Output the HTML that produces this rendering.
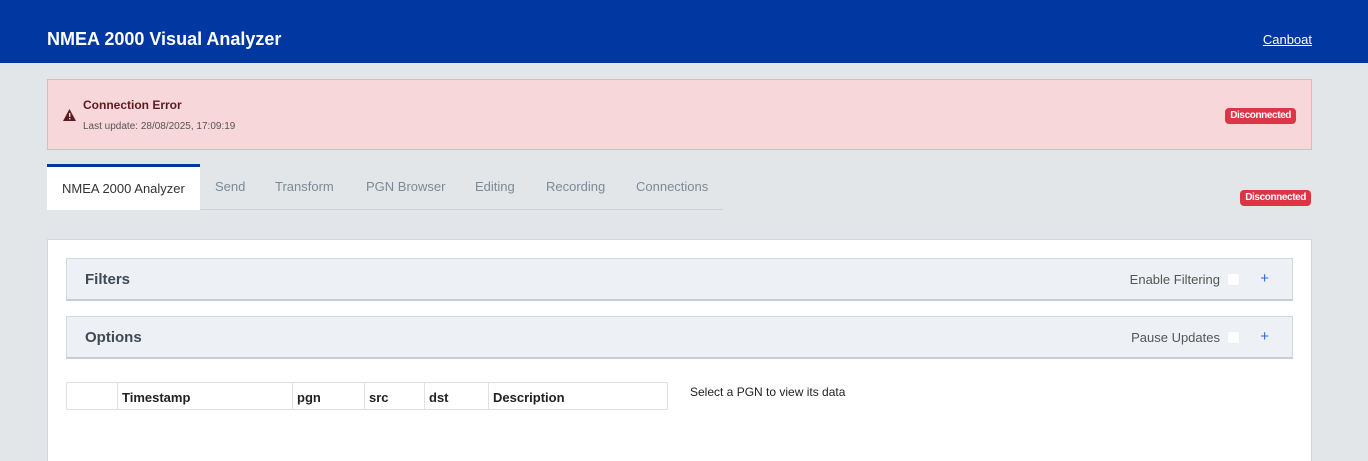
<!DOCTYPE html><html><head><style>
*{box-sizing:border-box;margin:0;padding:0}
html,body{width:1368px;height:461px;overflow:hidden}
body{background:#e3e6e8;font-family:"Liberation Sans","DejaVu Sans",sans-serif;position:relative}
.hdr{position:absolute;left:0;top:0;width:1368px;height:63px;background:#0037a0}
.hdr h1{position:absolute;left:47px;top:29px;color:#fff;font-size:18px;font-weight:bold}
.hdr a{position:absolute;right:56px;top:32px;color:#fff;font-size:13px;text-decoration:underline}
.alert{position:absolute;left:47px;top:79px;width:1265px;height:71px;background:#f8d7da;border:1px solid #f1b0b7}
.badge{position:absolute;background:#dc3545;color:#fff;font-size:10px;font-weight:bold;padding:2px 5px;border-radius:4px;line-height:12px;letter-spacing:-0.4px}
.tabs{position:absolute;left:47px;top:164px;width:676px;height:46px;border-bottom:1px solid #ccd2d8}
.tab{position:absolute;top:15px;font-size:13px;color:#7a8a99}
.active{position:absolute;left:0;top:0;width:153px;height:46px;background:#fff;border-top:3px solid #0037a0;font-size:13px;color:#333;padding:14px 0 0 15px}
.card{position:absolute;left:47px;top:239px;width:1265px;height:222px;background:#fff;border:1px solid #d0d6dc;border-bottom:none}
.pan{position:absolute;left:18px;width:1227px;height:43px;background:#edf0f4;border:1px solid #d0d8e0;border-bottom:2px solid #c5cfd9}
.pan b{position:absolute;left:18px;top:12px;font-size:15px;color:#3f4a55}
.pan span{position:absolute;right:72px;top:13px;font-size:13px;color:#555}
.cb{position:absolute;right:52px;top:14px;width:13px;height:13px;background:#fff;border-radius:3px;border:1px solid #eee}
.plus{position:absolute;right:23px;top:11px;color:#2a6ad8;font-size:15px}
table{position:absolute;left:18px;top:142px;border-collapse:collapse;font-size:13px;font-weight:bold;color:#222}
td{border:1px solid #dde2e6;height:27px;padding:3px 4px 0}
</style></head><body>
<div class="hdr"><h1>NMEA 2000 Visual Analyzer</h1><a>Canboat</a></div>
<div class="alert">
<svg style="position:absolute;left:15px;top:29px" width="13" height="12" viewBox="0 0 13 12"><path d="M6.5 0L13 12H0Z" fill="#5c1a22"/><rect x="6" y="4" width="1.4" height="4" fill="#f8d7da"/><rect x="6" y="9" width="1.4" height="1.4" fill="#f8d7da"/></svg>
<div style="position:absolute;left:35px;top:18px;font-size:12px;font-weight:bold;color:#5c1a22">Connection Error</div>
<div style="position:absolute;left:35px;top:41px;font-size:10px;color:#555">Last update: 28/08/2025, 17:09:19</div>
<span class="badge" style="right:15px;top:28px">Disconnected</span>
</div>
<div class="tabs"><div class="active">NMEA 2000 Analyzer</div>
<span class="tab" style="left:168px">Send</span><span class="tab" style="left:228px">Transform</span><span class="tab" style="left:319px">PGN Browser</span><span class="tab" style="left:428px">Editing</span><span class="tab" style="left:499px">Recording</span><span class="tab" style="left:589px">Connections</span></div>
<span class="badge" style="right:57px;top:190px">Disconnected</span>
<div class="card">
<div class="pan" style="top:18px"><b>Filters</b><span>Enable Filtering</span><div class="cb"></div><div class="plus">+</div></div>
<div class="pan" style="top:76px"><b>Options</b><span>Pause Updates</span><div class="cb"></div><div class="plus">+</div></div>
<table><tr><td style="width:51px"></td><td style="width:175px">Timestamp</td><td style="width:72px">pgn</td><td style="width:60px">src</td><td style="width:64px">dst</td><td style="width:179px">Description</td></tr></table>
<div style="position:absolute;left:642px;top:145px;font-size:12px;color:#222">Select a PGN to view its data</div>
</div>
</body></html>
